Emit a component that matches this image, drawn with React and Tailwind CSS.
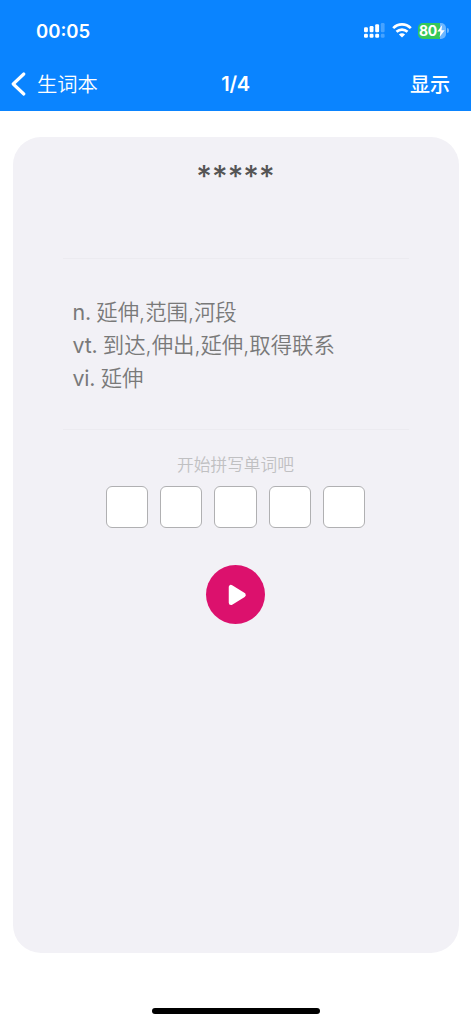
import React from 'react'

const definitions = [
  { type: 'n.', text: '延伸,范围,河段' },
  { type: 'vt.', text: '到达,伸出,延伸,取得联系' },
  { type: 'vi.', text: '延伸' }
]

const WORD_LENGTH = 5

const SignalIcon = () => (
  <svg width="21" height="15" viewBox="0 0 21 15" fill="white">
    <rect x="0" y="4.3" width="3.9" height="4.9" rx="1.2" />
    <rect x="5.6" y="3" width="3.9" height="6.2" rx="1.2" />
    <rect x="11.2" y="1.3" width="3.9" height="7.9" rx="1.2" />
    <rect x="16.8" y="0" width="3.8" height="9.2" rx="1.2" opacity="0.25" />
    <rect x="0" y="10.8" width="3.9" height="4" rx="1.2" />
    <rect x="5.6" y="10.8" width="3.9" height="4" rx="1.2" />
    <rect x="11.2" y="10.8" width="3.9" height="4" rx="1.2" />
    <rect x="16.8" y="10.8" width="3.8" height="4" rx="1.2" opacity="0.25" />
  </svg>
)

const WifiIcon = () => (
  <svg width="20" height="15" viewBox="0 0 20 15" fill="none" stroke="white" strokeWidth="2.7">
    <path d="M1.2 5.1 C6.2 0.1 13.8 0.1 18.8 5.1" />
    <path d="M4.5 8.7 C7.7 5.8 12.3 5.8 15.5 8.7" />
    <path d="M10 14.4 L6.9 11.4 C8.7 9.8 11.3 9.8 13.1 11.4 Z" fill="white" stroke="none" />
  </svg>
)

const BatteryIcon = () => (
  <div className="flex items-center gap-[1px]">
    <div className="flex h-4 w-[28px] items-center justify-center rounded-[5px] bg-linear-to-r from-[#34c759] from-80% to-[#6cb6ff] to-80% text-white">
      <span className="text-[14px] leading-4 font-bold tracking-[-0.4px]">80</span>
      <svg width="8" height="12" viewBox="0 0 7 11" fill="white">
        <path d="M4.6 0 L0.2 6 H3.1 L2.2 11 L6.9 4.7 H3.9 Z" />
      </svg>
    </div>
    <div className="h-[5px] w-[2px] rounded-r-full bg-[#6cb6ff]" />
  </div>
)

const StatusBar = () => (
  <div className="flex h-[61px] items-center justify-between pr-[22px] pl-[36px]">
    <span className="text-[18.5px] leading-6 font-semibold">00:05</span>
    <div className="flex items-center gap-[6.5px]">
      <SignalIcon />
      <WifiIcon />
      <BatteryIcon />
    </div>
  </div>
)

const NavBar = () => (
  <div className="grid h-[46px] grid-cols-3 items-center pr-[21px] pl-[11px]">
    <button type="button" className="flex items-center gap-[11px] text-left">
      <svg width="15" height="24" viewBox="0 0 15 24" fill="none" stroke="white" strokeWidth="3.1" strokeLinecap="round" strokeLinejoin="round">
        <path d="M12.8 2 L2.2 12 L12.8 22" />
      </svg>
      <span className="pt-[2px] text-[20.3px] font-[350]">生词本</span>
    </button>
    <span className="pl-[10px] text-center text-[20px] font-semibold tracking-[-0.3px]">1/4</span>
    <button type="button" className="pt-[2px] text-right text-[20px] font-medium">显示</button>
  </div>
)

const App = () => {
  return (
    <div className="flex h-screen w-full flex-col bg-white font-['Inter','Noto_Sans_CJK_SC',sans-serif]">
      <header className="h-[111px] shrink-0 bg-[#0a84ff] text-white">
        <StatusBar />
        <NavBar />
      </header>

      <main className="mx-auto mt-[26px] flex h-[816px] w-[446px] flex-col items-center rounded-[28px] bg-[#f2f1f6]">
        {/* Hidden word */}
        <div className="flex h-[122px] w-[346px] justify-center border-b border-[#ecebf0] pt-[21px]">
          <span className="h-[36px] text-[30px] leading-[36px] font-medium tracking-[0.1px] text-[#555]">*****</span>
        </div>

        {/* Definitions */}
        <div className="flex h-[171px] w-[346px] flex-col justify-center border-b border-[#ecebf0] pt-[2px] pl-[10px]">
          {definitions.map(({ type, text }) => (
            <p key={type} className="text-[21.4px] leading-[33px] font-[350] whitespace-nowrap text-[#797979] [word-spacing:-0.6px]">
              <span className="font-normal tracking-[-0.2px]">{type}</span> {text}
            </p>
          ))}
        </div>

        <p className="mt-[23px] text-[16.7px] leading-6 font-[350] text-[#c0c0c2]">开始拼写单词吧</p>

        {/* Letter boxes */}
        <div className="mt-[9px] flex gap-[12px]">
          {Array.from({ length: WORD_LENGTH }).map((_, i) => (
            <div key={i} className="size-[42.3px] rounded-[6px] border-[1.5px] border-[#b0b0b2] bg-white" />
          ))}
        </div>

        <button type="button" className="mt-[37px] flex size-[59px] items-center justify-center rounded-full bg-[#dc116d]">
          <svg width="19" height="22" viewBox="0 0 19 22" className="ml-[3px]" fill="white" stroke="white" strokeWidth="4.5" strokeLinejoin="round">
            <path d="M3 3.2 V18.8 L15.5 11 Z" />
          </svg>
        </button>
      </main>

      <div className="mx-auto mt-[55px] h-[6px] w-[168px] rounded-full bg-black" />
    </div>
  )
}

export default App
